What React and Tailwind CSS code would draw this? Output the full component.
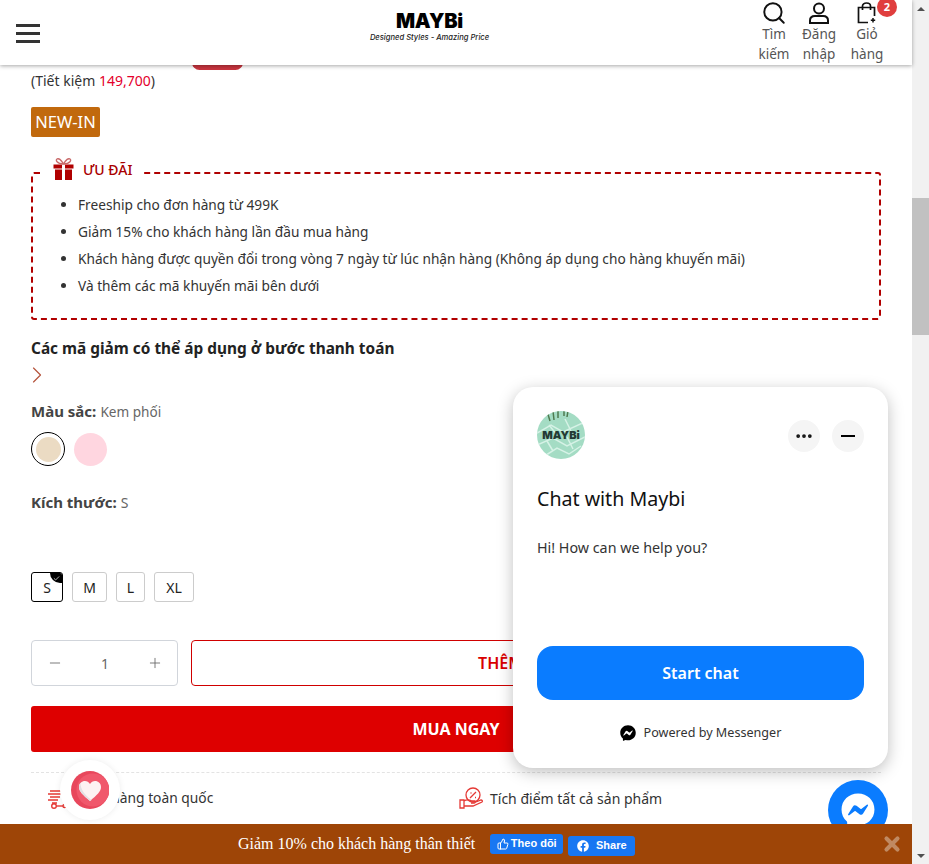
import React from 'react';
import { Search, Minus, Plus, ChevronRight, Check, ThumbsUp, MoreHorizontal, X } from 'lucide-react';
import { FaFacebook, FaFacebookMessenger } from 'react-icons/fa';

const promos = [
    'Freeship cho đơn hàng từ 499K',
    'Giảm 15% cho khách hàng lần đầu mua hàng',
    'Khách hàng được quyền đổi trong vòng 7 ngày từ lúc nhận hàng (Không áp dụng cho hàng khuyến mãi)',
    'Và thêm các mã khuyến mãi bên dưới',
];

const sizes = [
    { label: 'M', width: 'w-[35px]' },
    { label: 'L', width: 'w-[29px]' },
    { label: 'XL', width: 'w-[40px]' },
];

const UserIcon = () => (
    <svg width="22" height="22" viewBox="0 0 22 22" fill="none" stroke="#111" strokeWidth="2">
        <circle cx="11" cy="6.500" r="5" />
        <path d="M2 21v-2.500C2 15.500 4 14 7 14h8c3 0 5 1.500 5 4.500V21z" />
    </svg>
);

const BagIcon = () => (
    <svg width="20" height="22" viewBox="0 0 20 22" fill="none" stroke="#111" strokeWidth="1.700">
        <path d="M11 20.500H1.500V5.500h16V14" />
        <path d="M5.500 8V4C5.500 2.200 7.200 1 9.500 1s4 1.200 4 3v4" />
        <path d="M16 16v4.500M13.800 18.200h4.400" strokeWidth="1.500" />
    </svg>
);

const NavItem = ({ icon, lines, width }) => (
    <div className={`flex flex-col items-center ${width}`}>
        <div className="h-6 flex items-center justify-center mt-[1px]">{icon}</div>
        <div className="text-[13.500px] leading-[20px] text-[#555] mt-[-1px] text-center">
            {lines.map(l => <div key={l}>{l}</div>)}
        </div>
    </div>
);

const Header = () => (
    <header className="relative z-10 h-[65px] shrink-0 bg-white shadow-[0_1px_4px_rgba(0,0,0,0.35)] flex pl-4">
        <div className="w-6 mt-[24px] flex flex-col gap-[5px]">
            <div className="h-[3px] bg-[#333]"></div>
            <div className="h-[3px] bg-[#333]"></div>
            <div className="h-[3px] bg-[#333]"></div>
        </div>
        <div className="ml-[330px] w-[119px] mt-[9px] flex flex-col items-center">
            <div className="font-['Inter'] font-black text-[20px] leading-[24px] text-black tracking-[-0.2px]">MAYBi</div>
            <div className="font-['Inter'] italic font-medium text-[7.600px] leading-[10px] text-[#222] whitespace-nowrap">Designed Styles - Amazing Price</div>
        </div>
        <div className="ml-[265px] flex">
            <NavItem width="w-[40px]" lines={['Tìm', 'kiếm']} icon={<Search size={26} color="#111" strokeWidth={1.800} />} />
            <NavItem width="w-[50px]" lines={['Đăng', 'nhập']} icon={<UserIcon />} />
            <div className="relative ml-[3px]">
                <NavItem width="w-[40px]" lines={['Giỏ', 'hàng']} icon={<BagIcon />} />
                <span className="absolute left-[30px] top-[-3px] w-5 h-5 rounded-full bg-[#e03e3e] text-white text-[11px] font-bold flex items-center justify-center">2</span>
            </div>
        </div>
    </header>
);

const GiftIcon = () => (
    <svg width="21" height="22" viewBox="0 0 21 22" fill="#b00000">
        <path d="M0.500 6.500h20v4h-20zM2 11.500h17V22H2z" />
        <path d="M9 6.500h3V22H9z" fill="#fff" />
        <path d="M10.500 6C8 1.500 5.500 0 4 1S3.500 5.500 10.500 6zM10.500 6C13 1.500 15.500 0 17 1S17.500 5.500 10.500 6z" fill="none" stroke="#c96a6a" strokeWidth="1.400" />
    </svg>
);

const PromoBox = () => (
    <div className="relative mt-[35px] h-[148px] border-2 border-dashed border-[#b00000] rounded-[3px] pt-[17px] pl-[45px]">
        {/* Legend sits on the dashed line */}
        <div className="absolute left-[10px] top-[-16px] bg-white px-[10px] flex items-center gap-[9px] text-[14px] text-[#a90000] font-medium">
            <GiftIcon />
            <span>ƯU ĐÃI</span>
        </div>
        <ul className="list-disc text-[13.700px] leading-[27px] text-[#333]">
            {promos.map(p => <li key={p} className="whitespace-nowrap">{p}</li>)}
        </ul>
    </div>
);

const Swatches = () => (
    <div className="mt-[9px] flex items-center gap-[9px]">
        <div className="w-[34px] h-[34px] rounded-full border border-black flex items-center justify-center">
            <div className="w-[25px] h-[25px] rounded-full bg-[#ebdbc3]"></div>
        </div>
        <div className="w-[33px] h-[33px] rounded-full bg-[#ffd6e0]"></div>
    </div>
);

const SizeRow = () => (
    <div className="mt-[58px] flex gap-[9px] text-[14px] text-[#222]">
        <div className="relative w-[32px] h-[30px] rounded-[3px] border border-black flex items-center justify-center overflow-hidden">
            S
            <div className="absolute right-0 top-0 w-[12px] h-[10px] rounded-bl-full bg-black flex items-center justify-center">
                <Check size={7} color="#ccc" strokeWidth={3} />
            </div>
        </div>
        {sizes.map(s => (
            <div key={s.label} className={`${s.width} h-[30px] rounded-[3px] border border-[#ccc] flex items-center justify-center`}>{s.label}</div>
        ))}
    </div>
);

const Perks = () => (
    <div className="mt-[20px] border-t border-dashed border-[#e3e3e3] flex pt-[14px] text-[14px] text-[#333]">
        <div className="w-[428px] flex items-center pl-[16px]">
            <svg width="20" height="20" viewBox="0 0 20 20" fill="none" stroke="#e53935" strokeWidth="1.400">
                <path d="M3 2h13M1 5h13M3 8h10M1 11h10M5 14h5" />
                <circle cx="7" cy="17" r="2.300" />
                <circle cx="17.500" cy="17" r="1.500" />
                <path d="M9.500 17H16" />
            </svg>
            <span className="ml-[11px] text-[13.800px]">Giao hàng toàn quốc</span>
        </div>
        <div className="flex items-center">
            <svg width="25" height="23" viewBox="0 0 25 23" fill="none" stroke="#e53935" strokeWidth="1.300">
                <circle cx="14" cy="8" r="7" />
                <path d="M11 11l6-6M11.500 6h1M16 10.500h1" />
                <path d="M1 13h4v8H1zM5 14c3-2 6-1 8 0h3c1 1 0 2-1 2h-3M5 19h9l9-4c1-1 0-2-1-2l-5 2" />
            </svg>
            <span className="ml-[6px]">Tích điểm tất cả sản phẩm</span>
        </div>
    </div>
);

const ChatAvatar = () => (
    <div className="relative w-12 h-12 rounded-full overflow-hidden bg-[#a4dcc4] flex items-center justify-center">
        <svg className="absolute inset-0" width="48" height="48" viewBox="0 0 48 48" fill="none">
            <path d="M0 22l14-8 12 7 22-10M0 34l16-7 14 8 18-9M6 46l14-9 12 6 12-8M12 14l8 10M28 8l6 12M10 30l6 10M30 26l6 12" stroke="#d6f2e6" strokeWidth="1.500" />
            <path d="M10 0l3 10M16 0l1 9M21 0v7M27 0v5M31 0l-1 6" stroke="#4f7a4f" strokeWidth="1.500" />
        </svg>
        <span className="relative font-['Inter'] font-black text-[11px] text-[#243a34]">MAYBi</span>
    </div>
);

const ChatPanel = () => (
    <div className="absolute left-[513px] top-[387px] w-[375px] h-[381px] bg-white rounded-[20px] shadow-[0_4px_16px_rgba(0,0,0,0.25)] px-6 pt-6 flex flex-col font-['Noto_Sans'] z-20">
        <div className="flex items-center">
            <ChatAvatar />
            <div className="ml-auto flex gap-3 mt-[2px]">
                <div className="w-8 h-8 rounded-full bg-[#f5f5f5] flex items-center justify-center">
                    <MoreHorizontal size={20} color="#111" strokeWidth={2.500} />
                </div>
                <div className="w-8 h-8 rounded-full bg-[#f5f5f5] flex items-center justify-center">
                    <div className="w-[14px] h-[2px] bg-black"></div>
                </div>
            </div>
        </div>
        <div className="mt-[26px] text-[19.600px] leading-[28px] text-[#111]">Chat with Maybi</div>
        <div className="mt-[25px] text-[14.300px] leading-[20px] text-[#333]">Hi! How can we help you?</div>
        <div className="mt-[88px] h-[54px] rounded-[16px] bg-[#0a7cff] text-white text-[16px] font-semibold flex items-center justify-center">Start chat</div>
        <div className="mt-[24px] flex items-center justify-center gap-2 text-[12.600px] text-[#333]">
            <FaFacebookMessenger size={16} color="#000" />
            <span>Powered by Messenger</span>
        </div>
    </div>
);

const HeartBadge = () => (
    <svg width="38" height="38" viewBox="0 0 38 38">
        <circle cx="19" cy="19" r="19" fill="#e8475c" />
        <circle cx="22" cy="19" r="16.500" fill="#f0586c" />
        <path d="M19 30C12 24 8 20.500 8 16c0-3.500 2.700-6 6-6 2 0 3.800 1 5 3 1.200-2 3-3 5-3 3.300 0 6 2.500 6 6 0 4.500-4 8-11 14z" fill="#fdf2f3" />
        <path d="M19 30C12 24 8 20.500 8 16c0-1.500.5-3 1.500-4 0 6 4 12 11 17z" fill="#e3dfe3" />
    </svg>
);

const FloatingButtons = () => (
    <>
        <div className="absolute left-[60px] top-[760px] w-[60px] h-[60px] rounded-full bg-white shadow-[0_0_6px_rgba(0,0,0,0.08)] flex items-center justify-center z-20">
            <HeartBadge />
        </div>
        <div className="absolute left-[828px] top-[780px] w-[60px] h-[60px] rounded-full bg-[#0a7cff] flex items-center justify-center z-20">
            <FaFacebookMessenger size={34} color="#fff" />
        </div>
    </>
);

const PromoBar = () => (
    <div className="relative z-30 h-[40px] shrink-0 bg-[#9e4507] flex items-center pl-[238px]">
        <span className="font-['Liberation_Serif'] text-[16px] text-white">Giảm 10% cho khách hàng thân thiết</span>
        <div className="ml-[15px] mb-[1px] w-[73px] h-[20px] rounded-[3px] bg-[#1877f2] text-white font-['Liberation_Sans'] text-[11px] font-bold flex items-center justify-center gap-[2px]">
            <ThumbsUp size={12} color="#fff" />
            Theo dõi
        </div>
        <div className="ml-[5px] mt-[3px] w-[67px] h-[20px] rounded-[3px] bg-[#1877f2] text-white font-['Liberation_Sans'] text-[11px] font-bold flex items-center justify-center gap-[7px]">
            <FaFacebook size={12} color="#fff" />
            Share
        </div>
        <X className="ml-auto mr-[9px]" size={22} color="#c08a62" strokeWidth={4.500} />
    </div>
);

const Scrollbar = () => (
    <div className="w-[17px] shrink-0 bg-[#f1f1f1] flex flex-col items-center">
        <div className="h-[17px] flex items-center justify-center">
            <div className="border-x-[4px] border-x-transparent border-b-[4px] border-b-[#505050]"></div>
        </div>
        <div className="mt-[181px] w-full h-[137px] bg-[#c1c1c1]"></div>
        <div className="mt-auto h-[17px] flex items-center justify-center">
            <div className="border-x-[4px] border-x-transparent border-t-[4px] border-t-[#505050]"></div>
        </div>
    </div>
);

const App = () => {
    return (
        <div className="relative w-[929px] h-[864px] overflow-hidden flex bg-white font-['Noto_Sans',sans-serif]">
            <div className="w-[912px] flex flex-col">
                <Header />
                <main className="flex-1 overflow-hidden px-[31px] relative">
                    {/* Price line is scrolled under the header, only the badge bottom shows */}
                    <div className="absolute left-[192px] top-[-10px] w-[51px] h-[15px] rounded-[8px] bg-[#c9353f]"></div>
                    <div className="mt-[6px] text-[14px] leading-[20px] text-[#333]">(Tiết kiệm <span className="text-[#e4002b]">149,700</span>)</div>
                    <div className="mt-[16px] w-[69px] h-[30px] rounded-[2px] bg-[#c1690d] text-white text-[16.500px] flex items-center justify-center">NEW-IN</div>
                    <PromoBox />
                    <div className="mt-[18px] text-[15.400px] leading-[22px] font-bold text-[#222]">Các mã giảm có thể áp dụng ở bước thanh toán</div>
                    <ChevronRight className="mt-[1px] ml-[-8px]" size={28} color="#b5533c" strokeWidth={1} />
                    <div className="mt-[11px] leading-[22px]"><span className="text-[15px] font-bold text-[#444]">Màu sắc:</span> <span className="text-[13.600px] text-[#666]">Kem phối</span></div>
                    <Swatches />
                    <div className="mt-[25px] leading-[22px]"><span className="text-[15px] font-bold text-[#444]">Kích thước:</span> <span className="text-[14px] text-[#666]">S</span></div>
                    <SizeRow />
                    <div className="mt-[38px] flex gap-[13px]">
                        <div className="w-[147px] h-[46px] rounded-[4px] border border-[#d1d5db] flex items-center justify-between pl-[15px] pr-[14px] text-[#666] text-[14px]">
                            <Minus size={16} strokeWidth={1.300} />
                            <span>1</span>
                            <Plus size={16} strokeWidth={1.300} />
                        </div>
                        <div className="flex-1 h-[46px] rounded-[4px] border border-[#d00000] flex items-center justify-center text-[16px] font-semibold text-[#d90000]">THÊM VÀO GIỎ</div>
                    </div>
                    <div className="mt-[20px] h-[46px] rounded-[3px] bg-[#de0000] text-white text-[16px] font-bold flex items-center justify-center">MUA NGAY</div>
                    <Perks />
                </main>
                <PromoBar />
            </div>
            <Scrollbar />
            <ChatPanel />
            <FloatingButtons />
        </div>
    );
};

export default App;
